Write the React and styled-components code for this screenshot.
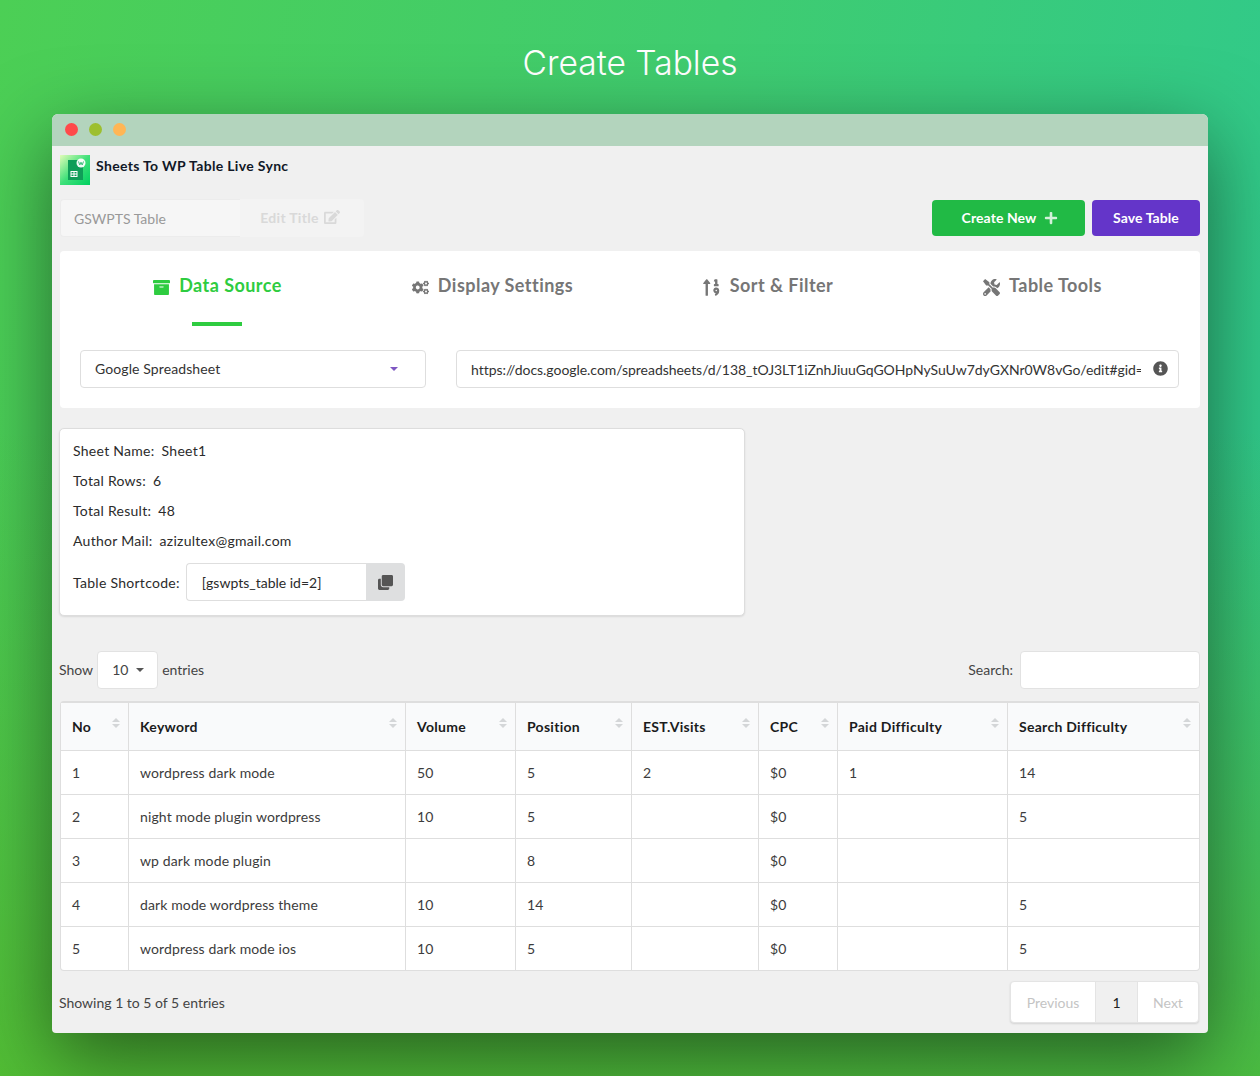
import React from 'react'
import styled, { createGlobalStyle } from 'styled-components'
import {
  FaArchive,
  FaCogs,
  FaSortNumericUp,
  FaTools,
  FaInfoCircle,
  FaClone,
  FaEdit,
  FaPlus,
} from 'react-icons/fa'

const GlobalStyle = createGlobalStyle`
  html, body {
    margin: 0;
    padding: 0;
  }
  body {
    font-family: Lato, "Liberation Sans", sans-serif;
    font-size: 14px;
    color: #333;
  }
  * {
    box-sizing: border-box;
  }
`

const Page = styled.div`
  width: 1260px;
  height: 1076px;
  overflow: hidden;
  padding: 0 52px;
  background: linear-gradient(100deg, #4ccf55 0%, #3fcc70 50%, #2ec98f 100%);
  position: relative;

  &::before {
    content: '';
    position: absolute;
    inset: 0;
    background: linear-gradient(180deg, rgba(85, 184, 40, 0) 40%, rgba(85, 184, 40, 0.75) 100%);
  }
`

const Heading = styled.h1`
  position: relative;
  margin: 0;
  height: 114px;
  padding-top: 42px;
  text-align: center;
  font-family: Inter, sans-serif;
  font-weight: 300;
  font-size: 33.6px;
  line-height: 42px;
  color: #fff;
`

const Window = styled.div`
  position: relative;
  height: 919px;
  background: #f0f0f0;
  border-radius: 6px 6px 4px 4px;
  box-shadow: 0 25px 80px rgba(0, 0, 0, 0.5);
`

const TitleBar = styled.div`
  height: 32px;
  display: flex;
  align-items: center;
  gap: 11px;
  padding: 0 14px 1px 13px;
  background: #b3d4bd;
  border-radius: 6px 6px 0 0;
`

const Dot = styled.span`
  width: 13px;
  height: 13px;
  border-radius: 50%;
  background: ${(props) => props.$color};
`

const Body = styled.div`
  padding: 9px 8px 0;
`

const Brand = styled.div`
  display: flex;
  align-items: flex-start;
  gap: 6px;
  height: 44px;
  font-weight: 700;
  font-size: 14px;
  line-height: 22px;
  letter-spacing: 0.33px;
  color: #111827;
`

const Toolbar = styled.div`
  display: flex;
  align-items: center;
  height: 38px;
`

const TitleInput = styled.div`
  width: 180px;
  height: 38px;
  padding: 0 13px;
  display: flex;
  align-items: center;
  background: #f6f6f6;
  border: 1px solid #ececec;
  border-right: none;
  border-radius: 4px 0 0 4px;
  color: #999;
`

const EditButton = styled.div`
  width: 124px;
  height: 38px;
  padding: 0 4px 2px 0;
  display: flex;
  align-items: center;
  justify-content: center;
  gap: 5px;
  background: #f3f3f3;
  border-radius: 0 4px 4px 0;
  color: #d9d9d9;
  font-weight: 700;
  letter-spacing: 0.3px;

  svg {
    font-size: 16px;
  }
`

const Actions = styled.div`
  margin-left: auto;
  display: flex;
  gap: 7px;
`

const Button = styled.div`
  width: ${(props) => props.$width}px;
  height: 36px;
  padding-bottom: 2px;
  display: flex;
  align-items: center;
  justify-content: center;
  gap: 7px;
  border-radius: 4px;
  background: ${(props) => props.$bg};
  color: #fff;
  font-weight: 700;
  letter-spacing: 0.08px;

  svg {
    font-size: 14px;
    opacity: 0.8;
    margin: 1px -3px 0 1px;
  }
`

const SourcePanel = styled.section`
  margin-top: 14px;
  height: 157px;
  padding: 0 20px;
  background: #fff;
  border-radius: 4px;
`

const Tabs = styled.div`
  display: grid;
  grid-template-columns: repeat(4, 1fr);
  height: 99px;
`

const Tab = styled.div`
  position: relative;
  display: flex;
  justify-content: center;
  padding-top: 21px;
  gap: 9px;
  font-weight: 700;
  font-size: 18px;
  line-height: 26px;
  letter-spacing: 0.46px;
  color: ${(props) => (props.$active ? '#2ecc40' : '#767676')};

  svg {
    margin-top: ${(props) => (props.$large ? 6 : 7)}px;
    font-size: ${(props) => (props.$large ? 19 : 17)}px;
  }

  ${(props) =>
    props.$active &&
    `&::after {
      content: '';
      position: absolute;
      left: 112px;
      top: 71px;
      width: 50px;
      height: 4px;
      background: #2ecc40;
    }`}
`

const SourceRow = styled.div`
  display: grid;
  grid-template-columns: 346px 723px;
  column-gap: 30px;
`

const Field = styled.div`
  height: 38px;
  padding: 0 14px 1px;
  display: flex;
  align-items: center;
  background: #fff;
  border: 1px solid #dedede;
  border-radius: 4px;
  color: #333;
  letter-spacing: 0.1px;
  white-space: nowrap;
`

const Caret = styled.span`
  margin-left: auto;
  margin-right: ${(props) => props.$gap}px;
  border-left: 4px solid transparent;
  border-right: 4px solid transparent;
  border-top: 4px solid ${(props) => props.$color};
`

const UrlText = styled.span`
  width: 670px;
  margin-top: 2px;
  overflow: hidden;
  letter-spacing: -0.04px;
`

const InfoIcon = styled.span`
  margin-left: auto;
  margin-right: -4px;
  display: flex;
  color: #555;
  font-size: 15px;
`

const InfoCard = styled.section`
  margin-top: 20px;
  margin-left: -1px;
  width: 686px;
  height: 188px;
  padding: 6px 13px;
  background: #fff;
  border: 1px solid #ddd;
  border-radius: 5px;
  box-shadow: 0 1px 2px rgba(0, 0, 0, 0.1);
`

const InfoRow = styled.div`
  display: flex;
  gap: 7px;
  height: 30px;
  align-items: center;
  letter-spacing: 0.28px;
  color: #2b2b2b;
`

const Shortcode = styled.div`
  display: flex;
  align-items: center;
  gap: 6px;
  margin-top: 8px;
  letter-spacing: 0.28px;
  color: #2b2b2b;
`

const ShortcodeBox = styled.div`
  display: flex;
  height: 38px;
  width: 219px;
`

const ShortcodeText = styled.div`
  flex: 1;
  display: flex;
  align-items: center;
  padding-left: 15px;
  border: 1px solid #dedede;
  border-right: none;
  border-radius: 4px 0 0 4px;
  letter-spacing: 0;
`

const CopyButton = styled.div`
  width: 39px;
  display: flex;
  align-items: center;
  justify-content: center;
  background: #dedfe0;
  border-radius: 0 4px 4px 0;
  color: #555;
  font-size: 15px;
`

const Controls = styled.div`
  margin-top: 35px;
  margin-left: -1px;
  margin-bottom: 12px;
  display: flex;
  align-items: center;
  height: 38px;
  color: #444;
  padding-bottom: 1px;
`

const LengthSelect = styled.div`
  width: 61px;
  height: 38px;
  margin: 1px 4px 0;
  padding-left: 14px;
  padding-bottom: 1px;
  display: flex;
  align-items: center;
  background: #fff;
  border: 1px solid #e2e2e2;
  border-radius: 4px;
`

const SearchBox = styled.div`
  margin-left: auto;
  display: flex;
  align-items: center;
  gap: 7px;
`

const SearchInput = styled.div`
  width: 180px;
  height: 38px;
  margin-top: 1px;
  background: #fff;
  border: 1px solid #e2e2e2;
  border-radius: 4px;
`

const Table = styled.table`
  width: 1140px;
  table-layout: fixed;
  border-collapse: separate;
  border-spacing: 0;
  background: #fff;
  border: 1px solid #dedede;
  border-top-width: 2px;
  border-radius: 4px;
`

const HeadCell = styled.th`
  position: relative;
  height: 48px;
  padding: 0 11px;
  text-align: left;
  font-weight: 700;
  font-size: 14px;
  letter-spacing: 0.28px;
  color: #1b1c1d;
  background: #f9fafb;
  border-left: ${(props) => (props.$first ? 'none' : '1px solid #dedede')};
  border-bottom: 1px solid #dedede;
`

const SortMark = styled.span`
  position: absolute;
  top: 15px;
  right: 8px;
  width: 8px;
  height: 10px;

  &::before,
  &::after {
    content: '';
    position: absolute;
    left: 0;
    border-left: 4px solid transparent;
    border-right: 4px solid transparent;
  }
  &::before {
    top: 0;
    border-bottom: 4.5px solid #d4d6d8;
  }
  &::after {
    bottom: 0;
    border-top: 4.5px solid #d4d6d8;
  }
`

const Cell = styled.td`
  height: ${(props) => (props.$last ? 43 : 44)}px;
  padding: 0 11px;
  letter-spacing: 0.12px;
  color: #3c3c3c;
  border-left: ${(props) => (props.$first ? 'none' : '1px solid #dedede')};
  border-bottom: ${(props) => (props.$last ? 'none' : '1px solid #dedede')};
`

const Footer = styled.div`
  margin-top: 10px;
  margin-left: -1px;
  display: flex;
  align-items: center;
  color: #444;
`

const Pagination = styled.div`
  margin-left: auto;
  margin-right: 1px;
  display: flex;
  height: 42px;
  background: #fff;
  border: 1px solid #e4e4e4;
  border-radius: 4px;
  box-shadow: 0 1px 2px rgba(0, 0, 0, 0.12);
`

const PageItem = styled.div`
  width: ${(props) => props.$width}px;
  display: flex;
  align-items: center;
  justify-content: center;
  color: ${(props) => (props.$current ? '#222' : '#c4c4c4')};
  background: ${(props) => (props.$current ? '#f0f0f0' : 'transparent')};
  border-left: ${(props) => (props.$first ? 'none' : '1px solid #e4e4e4')};
`

const columns = [
  ['No', 67],
  ['Keyword', 277],
  ['Volume', 110],
  ['Position', 116],
  ['EST.Visits', 127],
  ['CPC', 79],
  ['Paid Difficulty', 170],
  ['Search Difficulty', 192],
]

const rows = [
  ['1', 'wordpress dark mode', '50', '5', '2', '$0', '1', '14'],
  ['2', 'night mode plugin wordpress', '10', '5', '', '$0', '', '5'],
  ['3', 'wp dark mode plugin', '', '8', '', '$0', '', ''],
  ['4', 'dark mode wordpress theme', '10', '14', '', '$0', '', '5'],
  ['5', 'wordpress dark mode ios', '10', '5', '', '$0', '', '5'],
]

const tabs = [
  ['Data Source', FaArchive],
  ['Display Settings', FaCogs],
  ['Sort & Filter', FaSortNumericUp, true],
  ['Table Tools', FaTools],
]

const info = [
  ['Sheet Name:', 'Sheet1'],
  ['Total Rows:', '6'],
  ['Total Result:', '48'],
  ['Author Mail:', 'azizultex@gmail.com'],
]

function PluginLogo() {
  return (
    <svg width="30" height="30" viewBox="0 0 30 30">
      <defs>
        <linearGradient id="logoBg" x1="0" y1="0" x2="1" y2="1">
          <stop offset="0" stopColor="#e2fcb8" />
          <stop offset="0.5" stopColor="#3fe07a" />
          <stop offset="1" stopColor="#00d060" />
        </linearGradient>
      </defs>
      <rect width="30" height="30" fill="url(#logoBg)" />
      <path d="M8 5h11l4 4v16H8z" fill="#0f9d58" />
      <path
        d="M10.500 16h7v6h-7z M11.500 17v1.500h2V17z M14.500 17v1.500h2V17z M11.500 19.500V21h2v-1.500z M14.500 19.500V21h2v-1.500z"
        fill="#fff"
        fillRule="evenodd"
      />
      <circle cx="21" cy="8" r="4.500" fill="#fff" opacity="0.95" />
      <path d="M18.500 6.500l1.300 3.500 1.200-2.800 1.200 2.800 1.300-3.500" fill="none" stroke="#3bbf7a" strokeWidth="1" />
    </svg>
  )
}

export default function App() {
  return (
    <Page>
      <GlobalStyle />
      <Heading>Create Tables</Heading>
      <Window>
        <TitleBar>
          <Dot $color="#ff4a4a" />
          <Dot $color="#9dbf2f" />
          <Dot $color="#ffb655" />
        </TitleBar>
        <Body>
          <Brand>
            <PluginLogo />
            Sheets To WP Table Live Sync
          </Brand>
          <Toolbar>
            <TitleInput>GSWPTS Table</TitleInput>
            <EditButton>
              Edit Title <FaEdit />
            </EditButton>
            <Actions>
              <Button $width={153} $bg="#21ba45">
                Create New <FaPlus />
              </Button>
              <Button $width={108} $bg="#6435c9">
                Save Table
              </Button>
            </Actions>
          </Toolbar>
          <SourcePanel>
            <Tabs>
              {tabs.map(([label, Icon, large], i) => (
                <Tab key={label} $active={i === 0} $large={large}>
                  <Icon />
                  {label}
                </Tab>
              ))}
            </Tabs>
            <SourceRow>
              <Field>
                Google Spreadsheet
                <Caret $color="#7e57c2" $gap={13} />
              </Field>
              <Field>
                <UrlText>
                  https://docs.google.com/spreadsheets/d/138_tOJ3LT1iZnhJiuuGqGOHpNySuUw7dyGXNr0W8vGo/edit#gid=0
                </UrlText>
                <InfoIcon>
                  <FaInfoCircle />
                </InfoIcon>
              </Field>
            </SourceRow>
          </SourcePanel>
          <InfoCard>
            {info.map(([label, value]) => (
              <InfoRow key={label}>
                <span>{label}</span>
                <span>{value}</span>
              </InfoRow>
            ))}
            <Shortcode>
              <span>Table Shortcode:</span>
              <ShortcodeBox>
                <ShortcodeText>[gswpts_table id=2]</ShortcodeText>
                <CopyButton>
                  <FaClone />
                </CopyButton>
              </ShortcodeBox>
            </Shortcode>
          </InfoCard>
          <Controls>
            Show
            <LengthSelect>
              10
              <Caret $color="#555" $gap={13} />
            </LengthSelect>
            entries
            <SearchBox>
              Search:
              <SearchInput />
            </SearchBox>
          </Controls>
          <Table>
            <colgroup>
              {columns.map(([label, width]) => (
                <col key={label} style={{ width }} />
              ))}
            </colgroup>
            <thead>
              <tr>
                {columns.map(([label], i) => (
                  <HeadCell key={label} $first={i === 0}>
                    {label}
                    <SortMark />
                  </HeadCell>
                ))}
              </tr>
            </thead>
            <tbody>
              {rows.map((row, r) => (
                <tr key={row[0]}>
                  {row.map((value, i) => (
                    <Cell key={i} $first={i === 0} $last={r === rows.length - 1}>
                      {value}
                    </Cell>
                  ))}
                </tr>
              ))}
            </tbody>
          </Table>
          <Footer>
            Showing 1 to 5 of 5 entries
            <Pagination>
              <PageItem $first $width={84}>Previous</PageItem>
              <PageItem $current $width={42}>1</PageItem>
              <PageItem $width={61}>Next</PageItem>
            </Pagination>
          </Footer>
        </Body>
      </Window>
    </Page>
  )
}
